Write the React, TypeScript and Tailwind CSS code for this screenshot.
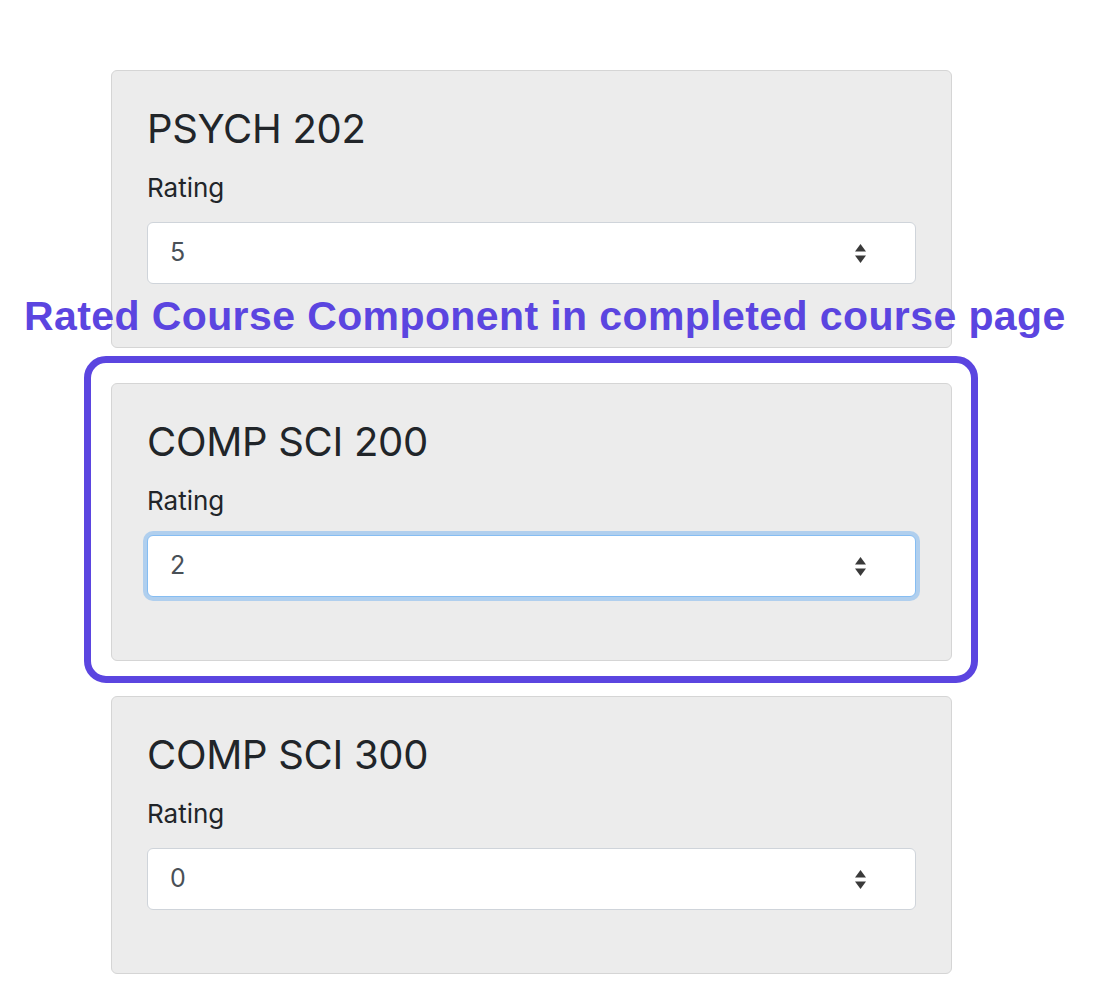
import React from "react";

function Arrows() {
  return (
    <svg width="13" height="21" viewBox="0 0 13 21" className="shrink-0">
      <path d="M6.5 1 L12 8.5 H1 Z" fill="#3a3a3a" />
      <path d="M1 12.5 H12 L6.5 20 Z" fill="#3a3a3a" />
    </svg>
  );
}

function CourseCard({ title, value, focused }: { title: string; value: string; focused?: boolean }) {
  return (
    <div className="rounded-[6px] border border-[#d5d5d5] bg-[#ececec] px-[35px] pt-[35px] pb-[63px]">
      <h4 className="text-[40px] leading-[46px] text-[#212529] font-normal tracking-[-0.3px]">{title}</h4>
      <div className="mt-[17px] text-[26px] leading-[37px] text-[#212529]">Rating</div>
      <div
        className={
          focused
            ? "mt-[16px] flex h-[62px] items-center justify-between rounded-[6px] border border-[#86bdf2] bg-white pl-[22px] pr-[48px] shadow-[0_0_0_4px_rgba(128,184,240,0.55)]"
            : "mt-[16px] flex h-[62px] items-center justify-between rounded-[6px] border border-[#cfd4da] bg-white pl-[22px] pr-[48px]"
        }
      >
        <span className="text-[25px] text-[#495057]">{value}</span>
        <Arrows />
      </div>
    </div>
  );
}

export default function App() {
  return (
    <div className="relative min-h-[1000px] w-[1106px] bg-white" style={{ fontFamily: "Inter, 'Noto Sans', sans-serif" }}>
      <div className="flex w-[952px] flex-col gap-[35px] pl-[111px] pt-[70px]">
        <CourseCard title="PSYCH 202" value="5" />
        <CourseCard title="COMP SCI 200" value="2" focused />
        <CourseCard title="COMP SCI 300" value="0" />
      </div>
      <div className="pointer-events-none absolute left-[84px] top-[356px] h-[327px] w-[894px] rounded-[22px] border-[7px] border-[#5b45e0]" />
      <div
        className="absolute left-[24px] top-[294px] whitespace-nowrap text-[41px] font-bold leading-[44px] tracking-[0.4px] text-[#5b45e0]"
        style={{ fontFamily: "'Liberation Sans', Arial, sans-serif" }}
      >
        Rated Course Component in completed course page
      </div>
    </div>
  );
}
